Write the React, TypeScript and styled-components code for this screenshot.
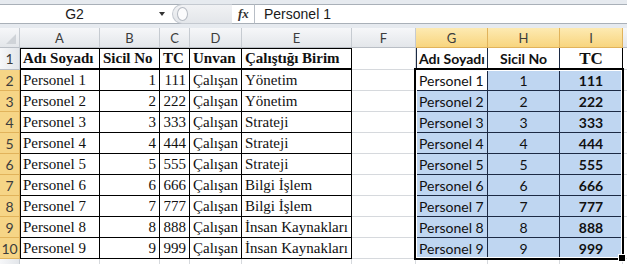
import { Fragment } from "react";
import styled, { createGlobalStyle, css } from "styled-components";

const GlobalStyle = createGlobalStyle`
  html, body {
    margin: 0;
    padding: 0;
    background: #ffffff;
    overflow: hidden;
  }
  * { box-sizing: border-box; }
`;

const SERIF = `"Liberation Serif", "Times New Roman", serif`;
const SANS = `Lato, "Open Sans", "Liberation Sans", sans-serif`;
const UI = `"Liberation Sans", Arial, sans-serif`;

type Row = [string, number, number, string];

const rows: Row[] = [
  ["Personel 1", 1, 111, "Yönetim"],
  ["Personel 2", 2, 222, "Yönetim"],
  ["Personel 3", 3, 333, "Strateji"],
  ["Personel 4", 4, 444, "Strateji"],
  ["Personel 5", 5, 555, "Strateji"],
  ["Personel 6", 6, 666, "Bilgi İşlem"],
  ["Personel 7", 7, 777, "Bilgi İşlem"],
  ["Personel 8", 8, 888, "İnsan Kaynakları"],
  ["Personel 9", 9, 999, "İnsan Kaynakları"],
];

const columns = ["A", "B", "C", "D", "E", "F", "G", "H", "I", ""];
const selectedCols = ["G", "H", "I"];

// ---------- formula bar ----------
const FormulaBar = styled.div`
  height: 28px;
  background: #e6eaef;
  padding: 4px 0 4px 0;
  display: flex;
`;

const NameBox = styled.div`
  width: 172px;
  background: #fff;
  border-top: 1px solid #a9b0b8;
  border-bottom: 1px solid #a9b0b8;
  display: flex;
  align-items: center;
  font-family: ${UI};
  font-size: 14px;
  color: #1a1a1a;

  span {
    flex: 1;
    text-align: center;
    padding-left: 2px;
  }
`;

const DropArrow = styled.i`
  width: 0;
  height: 0;
  border-left: 3px solid transparent;
  border-right: 3px solid transparent;
  border-top: 4px solid #333;
  margin: 0 7px 0 12px;
`;

const Splitter = styled.div`
  width: 82px;
  background: #fff;
  border-top: 1px solid #a9b0b8;
  border-bottom: 1px solid #a9b0b8;
  display: flex;
  align-items: center;
  gap: 6px;
`;

const Pill = styled.div`
  width: 60px;
  height: 20px;
  border-radius: 10px 0 0 10px;
  background: linear-gradient(#f1f2f4, #e3e6ea);
  border: 1px solid #c4c9d0;
  border-right: none;
  display: flex;
  align-items: center;
  padding-left: 4px;

  &::before {
    content: "";
    width: 9px;
    height: 12px;
    border-radius: 50%;
    border: 1px solid #b5bac2;
    background: #fbfbfc;
  }
`;

const Fx = styled.span`
  font-family: ${SERIF};
  font-style: italic;
  font-weight: bold;
  font-size: 13px;
  color: #333;
`;

const FormulaInput = styled.div`
  flex: 1;
  background: #fff;
  border-top: 1px solid #a9b0b8;
  border-bottom: 1px solid #a9b0b8;
  border-left: 1px solid #b8bec6;
  display: flex;
  align-items: center;
  padding-left: 9px;
  font-family: ${UI};
  font-size: 14px;
  color: #1a1a1a;
`;

// ---------- sheet ----------
const Sheet = styled.div`
  position: relative;
  display: grid;
  grid-template-columns: 20px 80px 60px 30px 52px 110px 64px 72px 72px 63px 1fr;
  grid-template-rows: 20px 22px repeat(9, 21px) 21px;
`;

const headerBase = css<{ $on?: boolean }>`
  font-family: ${SANS};
  font-size: 13px;
  color: #3c3c3c;
  display: flex;
  align-items: center;
  justify-content: center;
  border-right: 1px solid ${(p) => (p.$on ? "#e1b35b" : "#c6cbd1")};
  border-bottom: 1px solid ${(p) => (p.$on ? "#e1b35b" : "#b9bec5")};
  background: ${(p) =>
    p.$on
      ? "linear-gradient(#fdeab2, #f8d57e)"
      : "linear-gradient(#f6f7f9, #e3e6ea)"};
`;

const Corner = styled.div`
  border-right: 1px solid #c6cbd1;
  border-bottom: 1px solid #b9bec5;
  background: linear-gradient(#f6f7f9, #e3e6ea);
  position: relative;

  &::after {
    content: "";
    position: absolute;
    right: 3px;
    bottom: 3px;
    border-left: 10px solid transparent;
    border-bottom: 10px solid #cfd3d8;
  }
`;

const ColHead = styled.div<{ $on?: boolean }>`
  ${headerBase}
`;

const RowHead = styled.div<{ $on?: boolean }>`
  ${headerBase}
  font-size: 14px;
  background: ${(p) => (p.$on ? "#f6d586" : "linear-gradient(90deg, #f6f7f9, #e3e6ea)")};
`;

type Line = "grid" | "black" | "navy";
const lineColor: Record<Line, string> = {
  grid: "#d6d9dd",
  black: "#000",
  navy: "#1c2a44",
};

const Cell = styled.div<{
  $line?: Line;
  $top?: boolean;
  $left?: boolean;
  $thick?: boolean;
  $serif?: boolean;
  $bold?: boolean;
  $align?: "left" | "center" | "right";
  $size?: number;
  $fill?: string;
}>`
  display: flex;
  align-items: center;
  justify-content: ${(p) =>
    p.$align === "right" ? "flex-end" : p.$align === "center" ? "center" : "flex-start"};
  padding: 0 3px;
  white-space: nowrap;
  overflow: hidden;
  font-family: ${(p) => (p.$serif ? SERIF : SANS)};
  font-size: ${(p) => p.$size ?? 15}px;
  font-weight: ${(p) => (p.$bold ? 700 : 400)};
  color: #111;
  background: ${(p) => p.$fill ?? "#fff"};
  border-right: 1px solid ${(p) => lineColor[p.$line ?? "grid"]};
  border-bottom: ${(p) => (p.$thick ? 2 : 1)}px solid ${(p) => lineColor[p.$line ?? "grid"]};
  box-shadow: ${(p) =>
    [
      p.$top ? `inset 0 1px 0 ${lineColor[p.$line ?? "grid"]}` : "",
      p.$left ? `inset 1px 0 0 ${lineColor[p.$line ?? "grid"]}` : "",
    ]
      .filter(Boolean)
      .join(", ") || "none"};
`;

// selection frame over G2:I10 (absolute grid child, does not take a cell)
const Selection = styled.div`
  position: absolute;
  grid-column: 8 / 11;
  grid-row: 3 / 12;
  inset: -2px -1px -1px -2px;
  border: 2px solid #000;
  box-shadow: inset 0 0 0 1px #fff;
  pointer-events: none;
  z-index: 2;

  &::after {
    content: "";
    position: absolute;
    right: -4px;
    bottom: -4px;
    width: 6px;
    height: 6px;
    background: #000;
    border: 1px solid #fff;
  }
`;

const BLUE = "#bfd6f1";

export default function App() {
  return (
    <>
      <GlobalStyle />
      <FormulaBar>
        <NameBox>
          <span>G2</span>
          <DropArrow />
        </NameBox>
        <Splitter>
          <Pill />
          <Fx>fx</Fx>
        </Splitter>
        <FormulaInput>Personel 1</FormulaInput>
      </FormulaBar>

      <Sheet>
        <Corner />
        {columns.map((c, i) => (
          <ColHead key={i} $on={selectedCols.includes(c)}>
            {c}
          </ColHead>
        ))}

        {/* row 1: headings */}
        <RowHead>1</RowHead>
        <Cell $line="black" $left $top $thick $serif $bold>Adı Soyadı</Cell>
        <Cell $line="black" $top $thick $serif $bold>Sicil No</Cell>
        <Cell $line="black" $top $thick $serif $bold>TC</Cell>
        <Cell $line="black" $top $thick $serif $bold>Unvan</Cell>
        <Cell $line="black" $top $thick $serif $bold>Çalıştığı Birim</Cell>
        <Cell />
        <Cell $line="navy" $left $bold $size={14}>Adı Soyadı</Cell>
        <Cell $line="navy" $bold $size={14} $align="center">Sicil No</Cell>
        <Cell $line="black" $bold $serif $size={17} $align="center">TC</Cell>
        <Cell />

        {rows.map(([name, no, tc, birim], i) => (
          <Fragment key={i}>
            <RowHead $on>{i + 2}</RowHead>
            <Cell $line="black" $left $serif>{name}</Cell>
            <Cell $line="black" $serif $align="right">{no}</Cell>
            <Cell $line="black" $serif $align="right">{tc}</Cell>
            <Cell $line="black" $serif>Çalışan</Cell>
            <Cell $line="black" $serif>{birim}</Cell>
            <Cell />
            <Cell $line="navy" $left $size={14} $fill={i === 0 ? "#fff" : BLUE}>
              {name}
            </Cell>
            <Cell $line="navy" $size={14} $align="center" $fill={BLUE}>
              {no}
            </Cell>
            <Cell $line="navy" $size={14} $bold $align="center" $fill={BLUE}>
              {tc}
            </Cell>
            <Cell />
          </Fragment>
        ))}

        {/* row 11 only peeks in at the bottom edge */}
        <RowHead />
        {columns.map((_, i) => (
          <Cell key={`r11${i}`} />
        ))}

        <Selection />
      </Sheet>
    </>
  );
}
